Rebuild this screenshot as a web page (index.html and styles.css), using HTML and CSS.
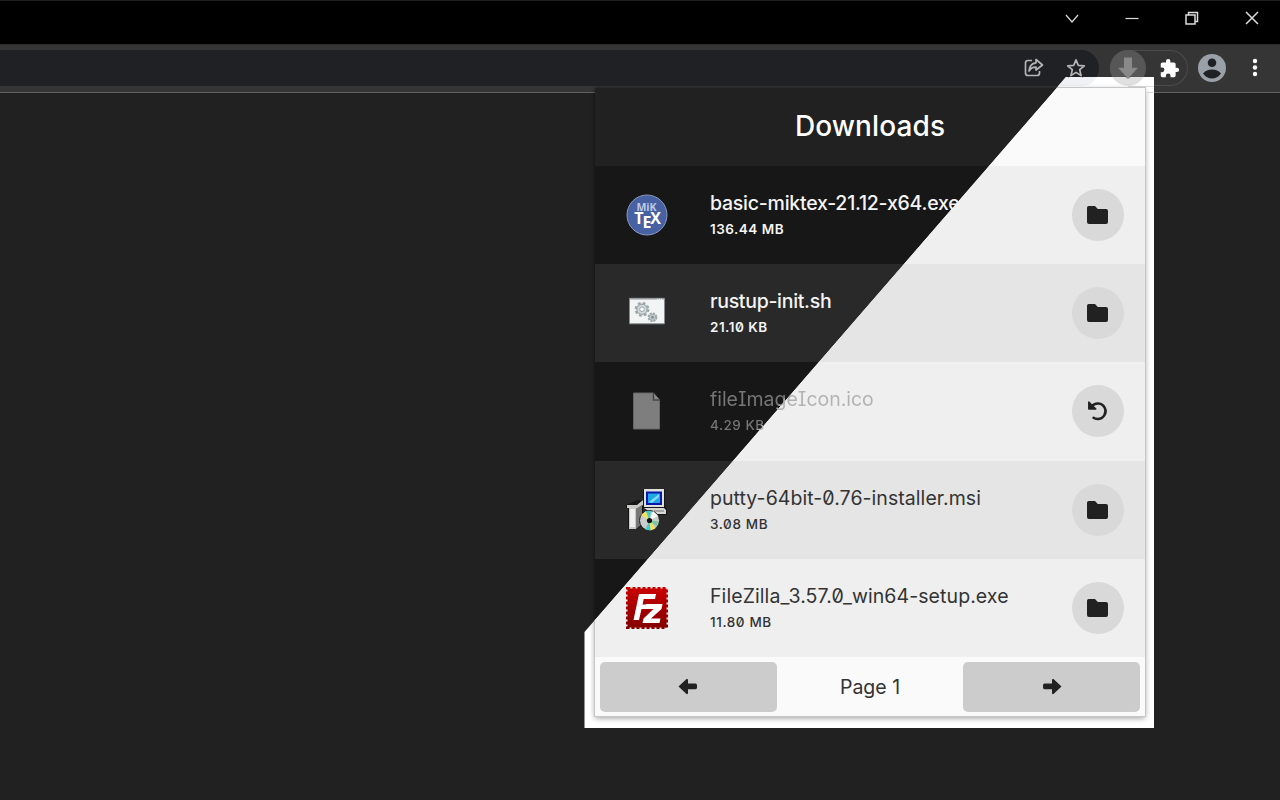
FILE: index.html
```html
<!DOCTYPE html>
<html lang="en">
<head>
<meta charset="utf-8">
<title>Downloads</title>
<link rel="stylesheet" href="styles.css">
</head>
<body>
<div class="browser">
  <header class="titlebar">
    <svg width="16" height="16" viewBox="0 0 16 16"><path d="M2 5l6 7 6-7"/></svg>
    <svg width="16" height="16" viewBox="0 0 16 16"><path d="M1.500 8.500h13"/></svg>
    <svg width="16" height="16" viewBox="0 0 16 16"><path d="M2 5h9v9h-9zM4.500 5V2.500h9v9H11" stroke-width="1.500"/></svg>
    <svg width="16" height="16" viewBox="0 0 16 16"><path d="M2 2l12 12M14 2L2 14" stroke-width="1.500"/></svg>
  </header>
  <nav class="toolbar">
    <div class="omnibox">
      <svg width="22" height="22" viewBox="0 0 22 22"><path d="M9 3.500H5Q2.500 3.500 2.500 6v10q0 2.500 2.500 2.500h9q2.500 0 2.500-2.500v-2M13 2.500l6.500 5.500-6.500 5V10.200Q8.500 10 6 14 6.500 6.500 13 5.800z"/></svg>
      <svg width="22" height="22" viewBox="0 0 22 22"><path d="M11 2.800l2.300 5.500 6 .5-4.600 3.900 1.400 5.900L11 15.400l-5.100 3.200 1.400-5.900L2.700 8.800l6-.5z"/></svg>
    </div>
    <div class="extensions">
      <div class="download"><svg width="20" height="22" viewBox="0 0 20 22"><path d="M6 .5h8v10.300h6L10 21.500 0 10.800h6z"/></svg></div>
      <svg class="puzzle" width="24" height="24" viewBox="0 0 24 24"><path d="M20.500 11H19V7c0-1.100-.9-2-2-2h-4V3.500a2.500 2.500 0 0 0-5 0V5H4c-1.100 0-2 .9-2 2v3.800h1.500a2.700 2.700 0 0 1 0 5.400H2V20c0 1.100.9 2 2 2h3.800v-1.500a2.700 2.700 0 0 1 5.400 0V22H17c1.100 0 2-.9 2-2v-4h1.500a2.500 2.500 0 0 0 0-5z"/></svg>
    </div>
    <svg class="avatar" width="28" height="28" viewBox="0 0 28 28"><circle cx="14" cy="14" r="14" fill="#9aa0a8"/><circle cx="14" cy="8.700" r="4.300" fill="#202124"/><path d="M5 19.500q3.200-4 9-4t9 4q-3.600 5-9 5t-9-5z" fill="#202124"/></svg>
    <svg class="more" width="6" height="20" viewBox="0 0 6 20"><circle cx="3" cy="3" r="2.200"/><circle cx="3" cy="9.500" r="2.200"/><circle cx="3" cy="16" r="2.200"/></svg>
  </nav>

  <main class="stage">
    <div class="backdrop light">
      <svg class="reflection" width="200" height="20" viewBox="0 0 200 20">
        <path d="M0 0H143Q138 9 127 9H0z" fill="#f0f1f4"/>
        <path d="M115.500-2l-.3 1.200 6.300-4M115.200-.8l6.300-3.800 6.300 3.800-.3-1.200" fill="none" stroke="#9a9a9a" stroke-width="1.700"/>
        <path d="M174 9.500h26M193 15.500h7" stroke="#ddd" stroke-width="1"/>
        <path d="M158.500 0A18 18 0 0 0 189.500 0z" fill="#e0e0e0"/>
        <path d="M171 0h6l-3 2z" fill="#929292"/>
      </svg>
      <div class="sheet"></div>
    </div>
    <div class="backdrop dark"><div class="sheet"></div></div>

    <section class="popup">
      <h1>Downloads</h1>
      <ul>
        <li>
          <svg class="file" width="44" height="44" viewBox="0 0 44 44"><circle cx="22" cy="22" r="20" fill="#4761a3" stroke="#8999c0"/><g font-family="Open Sans, sans-serif" font-weight="700" text-anchor="middle"><text x="21.500" y="17.500" font-size="10.500" fill="#bdc9e5">MiK</text><text x="22" y="30.500" font-size="16" fill="#fff" letter-spacing="-1.200">T<tspan dy="4">E</tspan><tspan dy="-4">X</tspan></text></g></svg>
          <div class="info bright"><b class="n1">basic-miktex-21.12-x64.exe</b><small>136.44 MB</small></div>
          <button class="round"><svg width="24" height="24" viewBox="0 0 24 24"><path d="M1 4.700Q1 3 2.700 3H9l2.800 3H20q2 0 2 2v11q0 2-2 2H3q-2 0-2-2z"/></svg></button>
        </li>
        <li>
          <svg class="file" width="44" height="44" viewBox="0 0 44 44"><g transform="translate(0 .8)"><path d="M4.500 6.500h35V32h-35z" fill="#f3f4f4" stroke="#858b8f"/><path d="M5 7h34" stroke="#929a9e" stroke-width="1.600"/><path d="M32 7.500h6" stroke="#fff" stroke-dasharray="1 1"/><g fill="#d3d9db" stroke="#9aa6aa"><circle cx="17" cy="17.500" r="6.300" stroke-width="2.200" stroke-dasharray="2.700 2.250"/><circle cx="17" cy="17.500" r="5"/><circle cx="17" cy="17.500" r="2.300" fill="#fff"/><circle cx="27.500" cy="25.500" r="4" stroke-width="1.800" stroke-dasharray="2 1.140"/><circle cx="27.500" cy="25.500" r="3"/><circle cx="27.500" cy="25.500" r="1.300" fill="#73848a"/></g></g></svg>
          <div class="info bright"><b class="n2">rustup-init.sh</b><small>21.10 KB</small></div>
          <button class="round"><svg width="24" height="24" viewBox="0 0 24 24"><path d="M1 4.700Q1 3 2.700 3H9l2.800 3H20q2 0 2 2v11q0 2-2 2H3q-2 0-2-2z"/></svg></button>
        </li>
        <li>
          <svg class="file" width="44" height="44" viewBox="0 0 44 44"><path d="M8.500 4h20l6 7v29h-26z" fill="#7e7e7e" stroke="#676767"/><path d="M28.500 4v7h6" fill="#8b8b8b" stroke="#454545" stroke-width="1.500"/></svg>
          <div class="info faded"><b class="n3">fileImageIcon.ico</b><small>4.29 KB</small></div>
          <button class="round undo"><svg width="24" height="24" viewBox="0 0 24 24"><path d="M7.500 18.800Q9 20 11.600 20A7.800 7.800 0 1 0 5.500 7.500"/><path class="tip" d="M2.800 3v7h7z"/></svg></button>
        </li>
        <li>
          <svg class="file" width="44" height="44" viewBox="0 0 44 44"><g transform="translate(0 -1)">
            <path d="M18 2h22v17l2 3v6H28l-10-7z" fill="#161616"/><path d="M19 2h20v18H19z" fill="#e0e0df"/><path d="M21 4.500h16V18H21z" fill="#0818aa"/><path d="M23 6.500h12v9.500H23z" fill="#20a7e8"/><path d="M24 15l10-8v3l-7 6z" fill="#83dcff"/><path d="M19 21h20l2 2v4H28z" fill="#d8d8d5"/><path d="M29 24h10" stroke="#777"/>
            <path d="M1 18l12-5h5v25l-7 4H3V21H1z" fill="#161616"/><path d="M2 18h10l6-5v5l-7 4v20H4V21H2z" fill="#c9c9c7"/><path d="M11 22l6-4v19l-6 5z" fill="#777"/><path d="M5 22h5v18H5z" fill="#eee"/>
            <circle cx="24.500" cy="33.500" r="10" fill="#c9cccb" stroke="#222"/><path d="M24.500 33.500L16 28l5-4zM24.500 33.500l6 8-5 2z" fill="#f3e25a"/><path d="M24.500 33.500L21 24h5zM24.500 33.500l1 10-5-1z" fill="#42cad0"/><path d="M24.500 33.500L28 24l5 5z" fill="#f9f9f9"/><path d="M24.500 33.500l9 1-2 5z" fill="#70cba3"/><circle cx="24.500" cy="33.500" r="2.600" fill="#111"/>
          </g></svg>
          <div class="info ink"><b class="n4">putty-64bit-0.76-installer.msi</b><small>3.08 MB</small></div>
          <button class="round"><svg width="24" height="24" viewBox="0 0 24 24"><path d="M1 4.700Q1 3 2.700 3H9l2.800 3H20q2 0 2 2v11q0 2-2 2H3q-2 0-2-2z"/></svg></button>
        </li>
        <li>
          <svg class="file" width="44" height="44" viewBox="0 0 44 44"><defs><linearGradient id="red" x2="0" y2="1"><stop stop-color="#c90000"/><stop offset="1" stop-color="#850000"/></linearGradient></defs><path d="M2.500 2.500h39v39h-39z" fill="url(#red)" stroke="url(#red)" stroke-width="3" stroke-dasharray="3 2"/><path d="M8.500 34L14 8H31L30 13H18.700L17.500 18.500H26L25 23H16.500L14 34zM21 18H37.500L36.500 23 26 32.500H35.500L34.500 37H17.500L18.500 32.500 28.500 23H20z" fill="#fff"/></svg>
          <div class="info ink"><b class="n5">FileZilla_3.57.0_win64-setup.exe</b><small>11.80 MB</small></div>
          <button class="round"><svg width="24" height="24" viewBox="0 0 24 24"><path d="M1 4.700Q1 3 2.700 3H9l2.800 3H20q2 0 2 2v11q0 2-2 2H3q-2 0-2-2z"/></svg></button>
        </li>
      </ul>
      <footer>
        <button class="previous"><svg width="20" height="18" viewBox="0 0 20 18"><path d="M.5 8.500L8.500 1Q10 .5 10 2V5.500H17.500Q19 5.500 19 7.500v2q0 1.800-1.500 1.800H10V15q0 1.500-1.500 1z"/></svg></button>
        <span>Page 1</span>
        <button><svg width="20" height="18" viewBox="0 0 20 18"><path d="M19.500 8.500L11.500 1Q10 .5 10 2V5.500H2.500Q1 5.500 1 7.500v2q0 1.800 1.500 1.800H10V15q0 1.500 1.500 1z"/></svg></button>
      </footer>
    </section>
  </main>
</div>
</body>
</html>
```
FILE: styles.css
```css
* { box-sizing: border-box; }
body { margin: 0; font-family: Inter, sans-serif; font-feature-settings: "zero" 1, "cv08" 1; background: #212121; }
svg { display: block; flex: none; }
button { border: 0; padding: 0; display: flex; align-items: center; justify-content: center; }
.browser { position: relative; width: 1280px; height: 800px; overflow: hidden; background: #212121; }
.titlebar { height: 44px; padding: 9px 20px 0 0; display: flex; justify-content: flex-end; gap: 44px; background: #000; border-top: 1px solid #202020; }
.titlebar svg { fill: none; stroke: #dcdcdc; stroke-width: 1.2; }
.toolbar { height: 49px; padding-bottom: 1px; display: flex; align-items: center; background: #353535; border-top: 1px solid #2c2c2c; border-bottom: 1px solid #626262; }
.omnibox { width: 1099px; height: 36px; display: flex; align-items: center; justify-content: flex-end; gap: 20px; padding-right: 12px; background: #202124; border-radius: 0 18px 18px 0; }
.omnibox svg { fill: none; stroke: #b4b4b4; stroke-width: 1.7; stroke-linejoin: round; }
.extensions { width: 78px; height: 36px; margin-left: 11px; display: flex; align-items: center; gap: 13px; border-radius: 18px; box-shadow: inset 0 0 0 1px #4b4b4b; }
.download { width: 36px; height: 36px; display: flex; align-items: center; justify-content: center; border-radius: 50%; background: #575757; }
.download svg { fill: #898989; }
.puzzle { width: 21px; height: 21px; fill: #fff; }
.avatar { margin-left: 10px; }
.more { margin-left: 25.5px; fill: #fff; }

.stage { position: absolute; left: 584px; top: 77px; width: 570px; height: 651px; }
.backdrop { position: absolute; inset: 0; padding: 11px 9px 12px 11px; }
.light { background: #fff; clip-path: polygon(482px 0, 100% 0, 100% 100%, .5px 100%, .5px 555px); }
.dark { clip-path: polygon(0 9px, 474.2px 9px, 0 555px); }
.reflection { position: absolute; left: 370px; top: 0; }
.sheet { position: relative; height: 628px; }
.light .sheet { box-shadow: 0 0 0 1px #c4c7c7, 0 2px 6px #0006; background: linear-gradient(#fafafa 78px, #efefef 0 176.3px, #e5e5e5 0 274.5px, #efefef 0 372.7px, #e5e5e5 0 470.8px, #efefef 0 569px, #fafafa 0); }
.dark .sheet { box-shadow: 0 0 4px #0008; background: linear-gradient(#212121 78px, #171717 0 176.3px, #292929 0 274.5px, #171717 0 372.7px, #292929 0 470.8px, #171717 0); }

.popup { position: relative; width: 550px; margin: 11px 0 0 11px; }
h1 { margin: 0; height: 78px; line-height: 76px; text-align: center; font-size: 28px; font-weight: 500; letter-spacing: .1px; color: #fff; }
ul { list-style: none; margin: 0; padding: 0; }
li { height: 98.2px; display: flex; align-items: center; padding: 0 21px 0 30px; }
.info { flex: 1; height: 54px; margin-left: 41px; display: flex; flex-direction: column; gap: 1px; }
.info b { font-size: 19.5px; line-height: 30px; white-space: nowrap; }
.info small { font-size: 13.5px; line-height: 20px; letter-spacing: .5px; }
.bright { color: #f4f4f4; }
.bright b { font-weight: 500; }
.bright small { font-weight: 600; }
.ink { color: #333; }
.ink b { font-weight: 400; }
.ink small { font-weight: 450; letter-spacing: .6px; }
.faded { color: transparent; background: linear-gradient(131deg, #777 65px, #b2b2b2 66px); background-clip: text; -webkit-background-clip: text; }
.faded b { font-weight: 400; }
.faded small { font-weight: 500; }
.info .n1 { letter-spacing: -.24px; }
.info .n2 { letter-spacing: -.3px; }
.info .n3 { letter-spacing: -.02px; }
.info .n4 { letter-spacing: .06px; }
.info .n5 { letter-spacing: .08px; }
.round { width: 52px; height: 52px; border-radius: 50%; background: #d9d9d9; }
.round svg { fill: #212121; }
.undo svg { fill: none; stroke: #212121; stroke-width: 2.5; stroke-linecap: round; stroke-linejoin: round; }
.undo .tip { fill: #212121; stroke-width: 1.5; }
footer { height: 59px; padding: 5px 5px 4px; display: flex; justify-content: space-between; align-items: center; font-size: 19.5px; color: #333; }
footer button { width: 177px; height: 50px; border-radius: 5px; background: #ccc; }
footer svg { fill: #212121; }
footer .previous { padding-right: 2px; }
```
